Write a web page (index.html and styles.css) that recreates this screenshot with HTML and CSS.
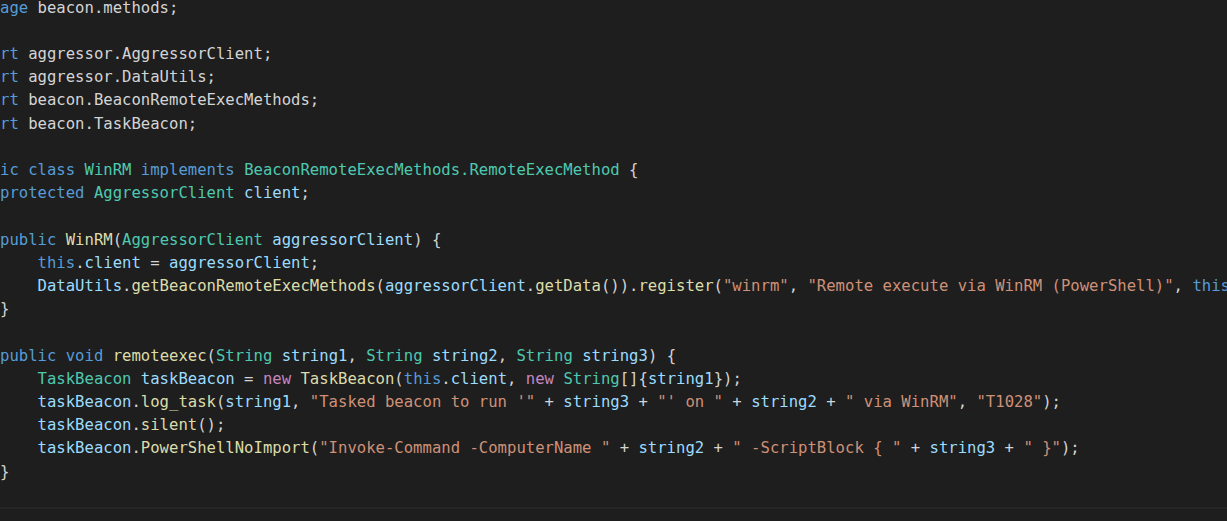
FILE: index.html
```html
<!DOCTYPE html>
<html>
<head>
<meta charset="utf-8">
<link rel="stylesheet" href="styles.css">
</head>
<body>
<div class="editor">
<pre class="code"><span class="kw">age</span> beacon.methods;

<span class="kw">rt</span> aggressor.AggressorClient;
<span class="kw">rt</span> aggressor.DataUtils;
<span class="kw">rt</span> beacon.BeaconRemoteExecMethods;
<span class="kw">rt</span> beacon.TaskBeacon;

<span class="kw">ic class</span> <span class="ty">WinRM</span> <span class="kw">implements</span> <span class="ty">BeaconRemoteExecMethods.RemoteExecMethod</span> {
<span class="kw">protected</span> <span class="ty">AggressorClient</span> <span class="va">client</span>;

<span class="kw">public</span> <span class="fn">WinRM</span>(<span class="ty">AggressorClient</span> <span class="va">aggressorClient</span>) {
    <span class="kw">this</span>.<span class="va">client</span> = <span class="va">aggressorClient</span>;
    <span class="va">DataUtils</span>.<span class="fn">getBeaconRemoteExecMethods</span>(<span class="va">aggressorClient</span>.<span class="fn">getData</span>()).<span class="fn">register</span>(<span class="st">"winrm"</span>, <span class="st">"Remote execute via WinRM (PowerShell)"</span>, <span class="kw">this</span>);
}

<span class="kw">public</span> <span class="kw">void</span> <span class="fn">remoteexec</span>(<span class="ty">String</span> <span class="va">string1</span>, <span class="ty">String</span> <span class="va">string2</span>, <span class="ty">String</span> <span class="va">string3</span>) {
    <span class="ty">TaskBeacon</span> <span class="va">taskBeacon</span> = <span class="nw">new</span> <span class="fn">TaskBeacon</span>(<span class="kw">this</span>.<span class="va">client</span>, <span class="nw">new</span> <span class="ty">String</span>[]{<span class="va">string1</span>});
    <span class="va">taskBeacon</span>.<span class="fn">log_task</span>(<span class="va">string1</span>, <span class="st">"Tasked beacon to run '"</span> + <span class="va">string3</span> + <span class="st">"' on "</span> + <span class="va">string2</span> + <span class="st">" via WinRM"</span>, <span class="st">"T1028"</span>);
    <span class="va">taskBeacon</span>.<span class="fn">silent</span>();
    <span class="va">taskBeacon</span>.<span class="fn">PowerShellNoImport</span>(<span class="st">"Invoke-Command -ComputerName "</span> + <span class="va">string2</span> + <span class="st">" -ScriptBlock { "</span> + <span class="va">string3</span> + <span class="st">" }"</span>);
}</pre>
<div class="rule"></div>
</div>
</body>
</html>
```

FILE: styles.css
```css
html, body {
  margin: 0;
  padding: 0;
  background: #1e1e1e;
  overflow: hidden;
}
.editor {
  width: 1227px;
  height: 521px;
  overflow: hidden;
  display: flex;
  flex-direction: column;
}
.code {
  margin: -3.5px 0 0 0;
  padding: 0;
  height: 510.5px;
  flex: none;
  font-family: "DejaVu Sans Mono", "Liberation Mono", monospace;
  font-size: 15.6px;
  line-height: 23.2px;
  color: #d4d4d4;
  white-space: pre;
  overflow: hidden;
}
.kw { color: #569cd6; }
.ty { color: #4ec9b0; }
.va { color: #9cdcfe; }
.fn { color: #dcdcaa; }
.st { color: #ce9178; }
.nw { color: #c586c0; }
.rule {
  height: 2px;
  flex: none;
  background: #262626;
}
```
